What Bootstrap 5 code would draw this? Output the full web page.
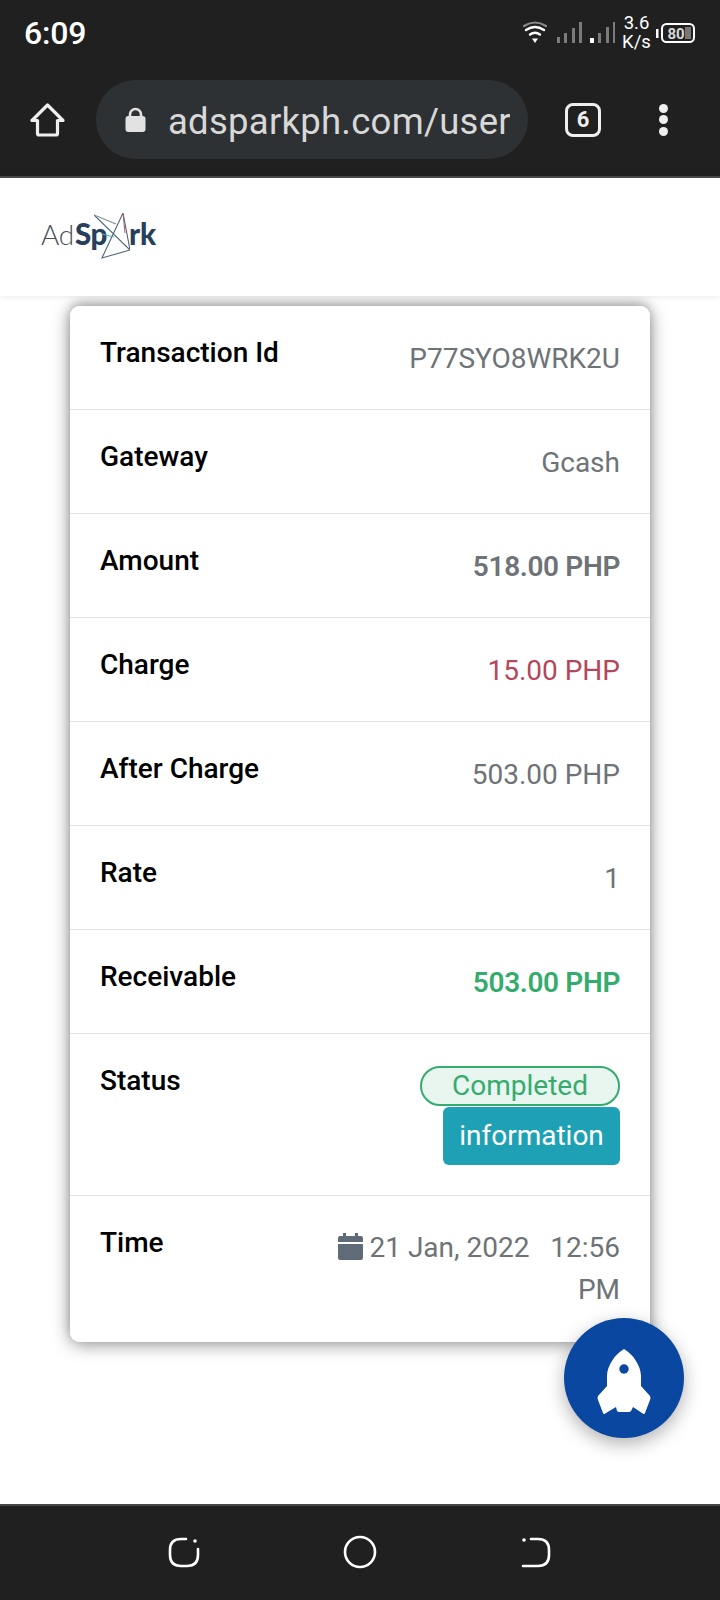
<!DOCTYPE html>
<html lang="en">
<head>
  <meta charset="UTF-8" />
  <title>Transaction Details</title>
  <meta name="viewport" content="width=device-width, initial-scale=1" />
  <link href="https://cdn.jsdelivr.net/npm/bootstrap@5.3.0/dist/css/bootstrap.min.css" rel="stylesheet">
  <style>
    body {
      font-family: Roboto, "Liberation Sans", sans-serif;
      background: #fff;
      width: 720px;
      height: 1600px;
      overflow: hidden;
    }
    .phone { height: 1600px; position: relative; }
    .status-strip { height: 76px; background: #202020; color: #fff; padding: 0 24px 10px 24px; }
    .clock { font-size: 32px; font-weight: 500; letter-spacing: -.2px; }
    .speed { font-size: 18.500px; line-height: 19px; text-align: center; margin: 0 5px 0 7px; width: 29px; }
    .browser-strip { height: 102px; background: #202020; border-bottom: 2px solid #46484a; padding: 5px 0 18px 30px; }
    .url-pill { width: 432px; height: 79px; margin-left: 31px; background: #2e3134; border-radius: 40px; padding: 0 18px 0 28px; color: #d8d8d8; font-size: 36.500px; overflow: hidden; white-space: nowrap; }
    .url-pill span { overflow: hidden; margin-left: 21px; letter-spacing: .25px; padding-top: 6px; }
    .tab-count { width: 36px; height: 34px; margin-left: 37px; border: 3.500px solid #efefef; border-radius: 8px; color: #efefef; font-size: 22px; font-weight: 700; line-height: 1; }
    .menu-dots { margin-left: 58px; gap: 2.500px; }
    .menu-dots i { display: block; width: 9px; height: 9px; border-radius: 50%; background: #efefef; }
    .site-head { height: 118px; padding: 0 0 0 41px; background: #fff; position: relative; z-index: 2; box-shadow: 0 1px 6px rgba(0, 0, 0, .08); }
    .brand-text { font-family: Lato, sans-serif; font-size: 29.500px; line-height: 1; color: #283f5c; font-weight: 900; letter-spacing: -.3px; }
    .brand-text > span { margin-bottom: 6px; }
    .brand-text .thin { font-size: 28px; font-weight: 300; color: #4c5157; margin-right: 1px; }
    .brand-star { width: 36px; height: 46px; margin: -2px -1px 0 -13px; flex: none; }
    .detail-card { border: 0; border-radius: 10px; overflow: hidden; }
    .card-wrap { border-radius: 10px; box-shadow: 0 2px 18px rgba(0, 0, 0, .45), 0 -4px 8px rgba(0, 0, 0, .15); width: 580px; margin: 10px 0 0 70px; }
    .detail-row { height: 104px; padding: 29px 30px 0; border-color: #e3e3e3; border-width: 0 0 2px; font-size: 28px; line-height: 42px; color: #6e7377; }
    .detail-row:last-child { border-bottom: 0; height: 146px; }
    .detail-row.tall { height: 162px; }
    .row-name { color: #000; font-weight: 500; flex: none; line-height: 36px; }
    .row-value { text-align: right; margin-top: 3px; }
    .amount-total { font-weight: 600; letter-spacing: -.35px; }
    .amount-charge { color: #b5475c; }
    .amount-get { color: #34ac6e; font-weight: 600; letter-spacing: -.35px; }
    .pill-done { border: 2px solid #34ac6e; background: #e9f6f0; color: #34ac6e; border-radius: 20px; width: 200px; height: 40px; line-height: 36px; text-align: center; font-size: 28px; }
    .info-btn { background: #1fa1b5; color: #fff; width: 177px; height: 58px; border-radius: 6px; border: 0; padding: 0; font-size: 28px; line-height: 56px; text-align: center; margin-top: 1px; }
    .status-stack { margin-top: 3px; }
    .time-value { margin-top: 2px; width: 300px; }
    .time-value svg { vertical-align: -3px; }
    .rocket-fab { position: absolute; left: 564px; top: 1318px; width: 120px; height: 120px; padding-top: 8px; border-radius: 50%; background: #0a47a1; box-shadow: 0 6px 18px rgba(0, 0, 0, .3); z-index: 3; }
    .nav-strip { position: absolute; left: 0; right: 0; bottom: 0; height: 96px; background: #202020; border-top: 2px solid #46484a; }
  </style>
</head>
<body>
  <div class="phone">
    <div class="status-strip d-flex align-items-center justify-content-between">
      <span class="clock">6:09</span>
      <div class="d-flex align-items-center">
        <svg width="92" height="30" viewBox="0 0 92 30">
          <g fill="none" stroke="#fff" stroke-linecap="round">
            <path d="M1 8Q12 1 23 8" stroke="#8a8a8a" stroke-width="2.200"/>
            <path d="M3 12Q12 6 21 12" stroke-width="2.400"/>
            <path d="M7 16.500Q12 13 17 16.500" stroke-width="2.400"/>
          </g>
          <path d="M9 20.500h6l-3 4.500z" fill="#fff"/>
          <g fill="#7b7b7b">
            <rect x="34" y="19" width="3" height="6"/><rect x="41" y="15" width="3" height="10"/><rect x="49" y="10" width="3" height="15"/><rect x="56" y="4" width="3" height="21"/>
            <rect x="75" y="15" width="3" height="10"/><rect x="83" y="9" width="3" height="16"/><rect x="90" y="4" width="2.500" height="21"/>
          </g>
          <rect x="67" y="20" width="4" height="5" fill="#fff"/>
        </svg>
        <div class="speed">3.6<br>K/s</div>
        <svg width="40" height="24" viewBox="0 0 40 24">
          <rect x="0" y="8" width="2.500" height="9" fill="#fff"/>
          <rect x="6" y="3" width="32" height="18" rx="4.500" fill="none" stroke="#fff" stroke-width="2"/>
          <rect x="29" y="6" width="6" height="12" fill="#777"/>
          <text x="20" y="17.500" text-anchor="middle" font-family="Roboto" font-weight="700" font-size="15" fill="#d8d8d8">80</text>
        </svg>
      </div>
    </div>

    <div class="browser-strip d-flex align-items-center">
      <svg width="35" height="34" viewBox="0 0 35 34"><path d="M17.500 2 2 17.500h5.500V30.500a1.500 1.500 0 0 0 1.500 1.500h17a1.500 1.500 0 0 0 1.500-1.500V17.500H33z" fill="none" stroke="#efefef" stroke-width="3.200" stroke-linejoin="round"/></svg>
      <div class="url-pill d-flex align-items-center">
        <svg width="23" height="25" viewBox="0 0 23 25" class="flex-shrink-0"><path d="M6 11V7.500a5.500 5.500 0 0 1 11 0V11" fill="none" stroke="#e2e2e2" stroke-width="2.600"/><rect x="1.500" y="9" width="20" height="16" rx="3" fill="#e2e2e2"/></svg>
        <span>adsparkph.com/user</span>
      </div>
      <div class="tab-count d-flex align-items-center justify-content-center">6</div>
      <div class="menu-dots d-flex flex-column"><i></i><i></i><i></i></div>
    </div>

    <header class="site-head d-flex align-items-center">
      <div class="brand-text d-flex align-items-center">
        <span><span class="thin">Ad</span>Sp</span>
        <svg class="brand-star" viewBox="0 0 36 46">
          <g fill="none" stroke-width="1.100">
            <path d="M0 2 36 37 8 45 29 0 36 37" stroke="#4e6674"/>
            <path d="M0 2 22 11" stroke="#7c8d96"/>
            <path d="M29 0 31 20" stroke="#b4606e"/>
            <path d="M8 21 20 24" stroke="#45b3ad"/>
          </g>
        </svg>
        <span>rk</span>
      </div>
    </header>

    <div class="card-wrap">
      <div class="card detail-card">
        <ul class="list-group list-group-flush">
          <li class="list-group-item detail-row d-flex justify-content-between"><span class="row-name">Transaction Id</span><span class="row-value">P77SYO8WRK2U</span></li>
          <li class="list-group-item detail-row d-flex justify-content-between"><span class="row-name">Gateway</span><span class="row-value">Gcash</span></li>
          <li class="list-group-item detail-row d-flex justify-content-between"><span class="row-name">Amount</span><span class="row-value amount-total">518.00 PHP</span></li>
          <li class="list-group-item detail-row d-flex justify-content-between"><span class="row-name">Charge</span><span class="row-value amount-charge">15.00 PHP</span></li>
          <li class="list-group-item detail-row d-flex justify-content-between"><span class="row-name">After Charge</span><span class="row-value">503.00 PHP</span></li>
          <li class="list-group-item detail-row d-flex justify-content-between"><span class="row-name">Rate</span><span class="row-value">1</span></li>
          <li class="list-group-item detail-row d-flex justify-content-between"><span class="row-name">Receivable</span><span class="row-value amount-get">503.00 PHP</span></li>
          <li class="list-group-item detail-row tall d-flex justify-content-between"><span class="row-name">Status</span>
            <div class="status-stack d-flex flex-column align-items-end">
              <div class="pill-done">Completed</div>
              <button class="info-btn">information</button>
            </div>
          </li>
          <li class="list-group-item detail-row d-flex justify-content-between"><span class="row-name">Time</span>
            <span class="row-value time-value"><svg width="25" height="27" viewBox="0 0 25 27"><path d="M5 0h3v3h9V0h3v3h3a2 2 0 0 1 2 2v4H0V5a2 2 0 0 1 2-2h3zM0 11h25v14a2 2 0 0 1-2 2H2a2 2 0 0 1-2-2z" fill="#5f6b76"/></svg> 21 Jan, 2022 &nbsp; 12:56 PM</span>
          </li>
        </ul>
      </div>
    </div>

    <a class="rocket-fab d-flex align-items-center justify-content-center" href="#">
      <svg width="54" height="66" viewBox="0 0 54 66"><path d="M27 0C36 5 44 17 44 27V37L53 47Q54 49 53 51L48 64Q47 66 45 64L36 58 34 62Q33 63 32 63H22Q21 63 20 62L19 58 9 64Q7 66 6 64L1 51Q0 49 1 47L10 37V27C10 17 18 5 27 0Z" fill="#fff"/><circle cx="27" cy="20" r="4.700" fill="#0a47a1"/></svg>
    </a>

    <div class="nav-strip d-flex align-items-start">
      <svg class="w-100" height="94" viewBox="0 0 720 94">
        <g fill="none" stroke="#fff" stroke-width="2.600" stroke-linecap="round">
          <path d="M186 33H181Q170 33 170 44V49Q170 60 181 60H187Q198 60 198 49V43"/>
          <circle cx="360" cy="46" r="15"/>
          <path d="M531 33H538Q549 33 549 44V49Q549 60 538 60H523"/>
        </g>
        <circle cx="195" cy="35" r="1.800" fill="#fff"/>
        <circle cx="524" cy="34" r="1.800" fill="#fff"/>
      </svg>
    </div>
  </div>
  <script src="https://cdn.jsdelivr.net/npm/bootstrap@5.3.0/dist/js/bootstrap.bundle.min.js"></script>
</body>
</html>
